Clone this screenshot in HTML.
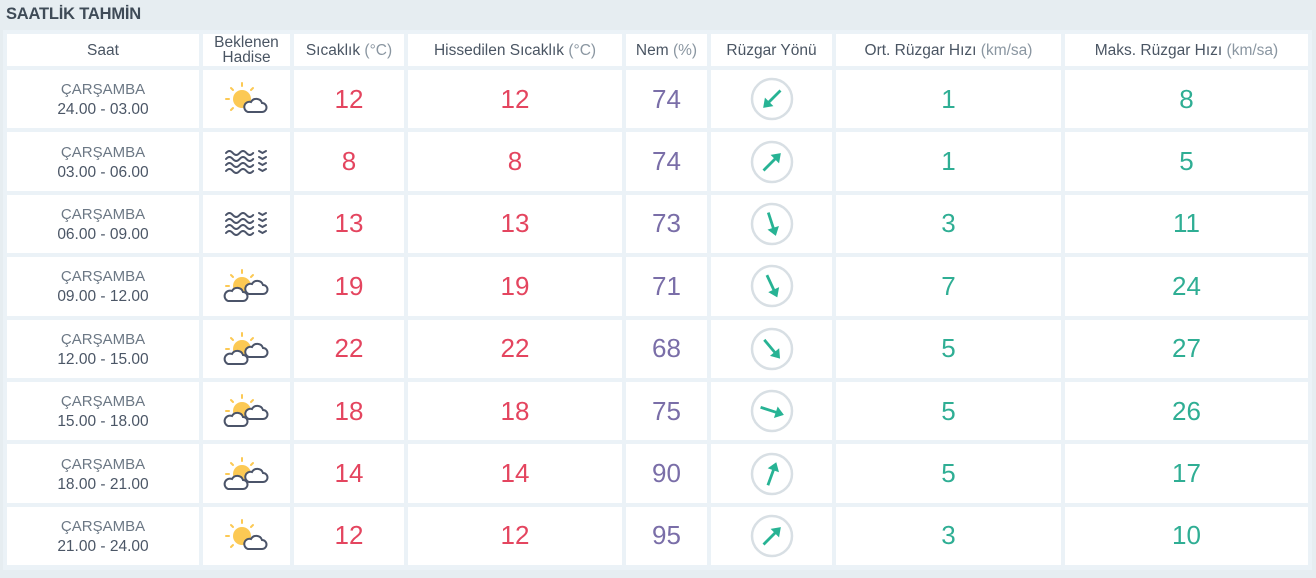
<!DOCTYPE html>
<html><head><meta charset="utf-8"><style>
html,body{margin:0;padding:0;}
body{width:1316px;height:578px;background:#e6edf1;font-family:"Liberation Sans","DejaVu Sans",sans-serif;position:relative;overflow:hidden;}
.title{position:absolute;left:6px;top:5px;font-size:16.5px;font-weight:bold;color:#3f4b57;letter-spacing:-0.2px;}
.wrap{position:absolute;left:3px;top:30px;width:1309px;height:540px;background:#ebf2f7;}
table{position:absolute;left:0;top:0;border-collapse:separate;border-spacing:4px;table-layout:fixed;}
td,th{background:#fff;text-align:center;padding:0;}
th{height:32px;font-weight:normal;font-size:15.5px;color:#4a5563;line-height:15px;}
th span{color:#8a96a1;}
td{height:58.4px;}
.s{font-size:15.5px;line-height:20px;color:#4b5666;}
.s div{position:relative;top:1px;}
.s b{font-weight:normal;color:#6c7885;font-size:15px;}
.t{font-size:26px;color:#e4455f;}
.n{font-size:26px;color:#7a6ea8;}
.w{font-size:26px;color:#2fae94;}
svg{display:block;margin:0 auto;}
</style></head><body>
<svg width="0" height="0" style="position:absolute">
<defs>
<g id="sun1"><g stroke="#fcc954" stroke-width="2" stroke-linecap="round"><line x1="19" y1="2" x2="19" y2="5"/><line x1="8" y1="7" x2="10" y2="9"/><line x1="30" y1="7" x2="28" y2="9"/><line x1="3" y1="18" x2="6" y2="18"/><line x1="8" y1="29" x2="10" y2="27"/></g><circle cx="19" cy="18" r="9" fill="#fcc954"/><path d="M25 31 h14 a4.5 4.5 0 0 0 0-9 a6 6 0 0 0-11-1 a5 5 0 0 0-3 10z" fill="#fff" stroke="#4b5469" stroke-width="2"/></g>
<g id="sun2"><g stroke="#fcc954" stroke-width="2" stroke-linecap="round"><line x1="19" y1="2" x2="19" y2="5"/><line x1="8" y1="7" x2="10" y2="9"/><line x1="30" y1="7" x2="28" y2="9"/><line x1="3" y1="18" x2="6" y2="18"/></g><circle cx="19" cy="18" r="9" fill="#fcc954"/><path d="M26 26 h14 a4.5 4.5 0 0 0 0-9 a6 6 0 0 0-11-1 a5 5 0 0 0-3 10z" fill="#fff" stroke="#4b5469" stroke-width="2"/><path d="M5 33 h15 a4.5 4.5 0 0 0 0-9 a6 6 0 0 0-11-1 a5 5 0 0 0-4 10z" fill="#fff" stroke="#4b5469" stroke-width="2"/></g>
<g id="fog" fill="none" stroke="#4b5469" stroke-width="2" stroke-linecap="round"><path d="M3 7 q3.4-4 6.8 0 t6.8 0 t6.8 0 t6.8 0"/><path d="M3 13 q3.4-4 6.8 0 t6.8 0 t6.8 0 t6.8 0"/><path d="M3 19 q3.4-4 6.8 0 t6.8 0 t6.8 0 t6.8 0"/><path d="M3 25 q3.4-4 6.8 0 t6.8 0 t6.8 0 t6.8 0"/><path d="M36 5 l3.5 2 l3.5-2"/><path d="M36 11 l3.5 2 l3.5-2"/><path d="M36 17 l3.5 2 l3.5-2"/><path d="M36 23 l3.5 2 l3.5-2"/></g>
<g id="arr"><circle cx="22" cy="22" r="20" fill="none" stroke="#d8dfe4" stroke-width="2.5"/></g>
<g id="ah" fill="#27b394"><rect x="20.6" y="16" width="2.8" height="18"/><path d="M16 18 L22 9.5 L28 18z"/></g>
</defs></svg>
<div class="title">SAATLİK TAHMİN</div>
<div class="wrap"><table>
<colgroup><col style="width:192px"><col style="width:87px"><col style="width:110px"><col style="width:214px"><col style="width:81px"><col style="width:121px"><col style="width:225px"><col style="width:243px"></colgroup>
<tr><th>Saat</th><th>Beklenen<br>Hadise</th><th>Sıcaklık <span>(°C)</span></th><th>Hissedilen Sıcaklık <span>(°C)</span></th><th>Nem <span>(%)</span></th><th>Rüzgar Yönü</th><th>Ort. Rüzgar Hızı <span>(km/sa)</span></th><th>Maks. Rüzgar Hızı <span>(km/sa)</span></th></tr>
<tr><td class="s"><div><b>ÇARŞAMBA</b><br>24.00 - 03.00</div></td><td><svg width="48" height="36" viewBox="0 0 48 36"><use href="#sun1"/></svg></td><td class="t">12</td><td class="t">12</td><td class="n">74</td><td><svg width="44" height="44" viewBox="0 0 44 44"><use href="#arr"/><g transform="rotate(225 22 22)"><use href="#ah"/></g></svg></td><td class="w">1</td><td class="w">8</td></tr>
<tr><td class="s"><div><b>ÇARŞAMBA</b><br>03.00 - 06.00</div></td><td><svg width="48" height="32" viewBox="0 0 48 32"><use href="#fog"/></svg></td><td class="t">8</td><td class="t">8</td><td class="n">74</td><td><svg width="44" height="44" viewBox="0 0 44 44"><use href="#arr"/><g transform="rotate(45 22 22)"><use href="#ah"/></g></svg></td><td class="w">1</td><td class="w">5</td></tr>
<tr><td class="s"><div><b>ÇARŞAMBA</b><br>06.00 - 09.00</div></td><td><svg width="48" height="32" viewBox="0 0 48 32"><use href="#fog"/></svg></td><td class="t">13</td><td class="t">13</td><td class="n">73</td><td><svg width="44" height="44" viewBox="0 0 44 44"><use href="#arr"/><g transform="rotate(162 22 22)"><use href="#ah"/></g></svg></td><td class="w">3</td><td class="w">11</td></tr>
<tr><td class="s"><div><b>ÇARŞAMBA</b><br>09.00 - 12.00</div></td><td><svg width="48" height="36" viewBox="0 0 48 36"><use href="#sun2"/></svg></td><td class="t">19</td><td class="t">19</td><td class="n">71</td><td><svg width="44" height="44" viewBox="0 0 44 44"><use href="#arr"/><g transform="rotate(155 22 22)"><use href="#ah"/></g></svg></td><td class="w">7</td><td class="w">24</td></tr>
<tr><td class="s"><div><b>ÇARŞAMBA</b><br>12.00 - 15.00</div></td><td><svg width="48" height="36" viewBox="0 0 48 36"><use href="#sun2"/></svg></td><td class="t">22</td><td class="t">22</td><td class="n">68</td><td><svg width="44" height="44" viewBox="0 0 44 44"><use href="#arr"/><g transform="rotate(140 22 22)"><use href="#ah"/></g></svg></td><td class="w">5</td><td class="w">27</td></tr>
<tr><td class="s"><div><b>ÇARŞAMBA</b><br>15.00 - 18.00</div></td><td><svg width="48" height="36" viewBox="0 0 48 36"><use href="#sun2"/></svg></td><td class="t">18</td><td class="t">18</td><td class="n">75</td><td><svg width="44" height="44" viewBox="0 0 44 44"><use href="#arr"/><g transform="rotate(108 22 22)"><use href="#ah"/></g></svg></td><td class="w">5</td><td class="w">26</td></tr>
<tr><td class="s"><div><b>ÇARŞAMBA</b><br>18.00 - 21.00</div></td><td><svg width="48" height="36" viewBox="0 0 48 36"><use href="#sun2"/></svg></td><td class="t">14</td><td class="t">14</td><td class="n">90</td><td><svg width="44" height="44" viewBox="0 0 44 44"><use href="#arr"/><g transform="rotate(20 22 22)"><use href="#ah"/></g></svg></td><td class="w">5</td><td class="w">17</td></tr>
<tr><td class="s"><div><b>ÇARŞAMBA</b><br>21.00 - 24.00</div></td><td><svg width="48" height="36" viewBox="0 0 48 36"><use href="#sun1"/></svg></td><td class="t">12</td><td class="t">12</td><td class="n">95</td><td><svg width="44" height="44" viewBox="0 0 44 44"><use href="#arr"/><g transform="rotate(45 22 22)"><use href="#ah"/></g></svg></td><td class="w">3</td><td class="w">10</td></tr>
</table></div>
</body></html>
